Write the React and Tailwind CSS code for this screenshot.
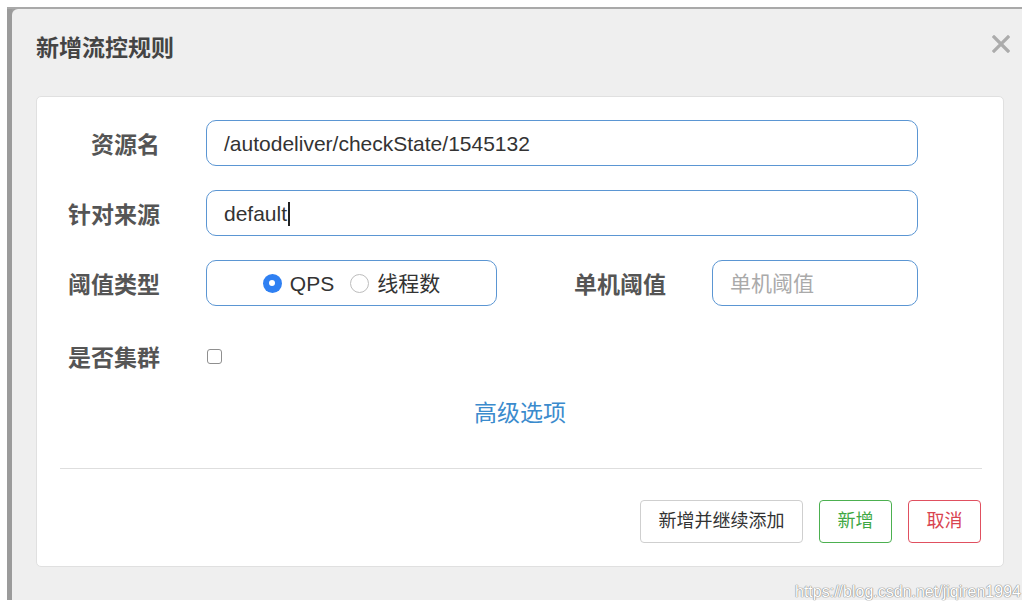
import React from 'react';

const FONT = { fontFamily: '"Liberation Sans", "Noto Sans CJK SC", sans-serif' };

function Label({ children, className = '' }) {
  return (
    <div className={`pt-[3px] text-right text-[23px] font-semibold text-[#555] leading-[28px] ${className}`}>
      {children}
    </div>
  );
}

function Radio({ checked, label }) {
  return (
    <label className="flex items-center gap-[8px]">
      {checked ? (
        <span className="flex h-[19px] w-[19px] items-center justify-center rounded-full bg-[#2f80f2]">
          <span className="h-[6px] w-[6px] rounded-full bg-white" />
        </span>
      ) : (
        <span className="h-[19px] w-[19px] rounded-full border border-[#bdbdbd] bg-white" />
      )}
      <span className="pt-[2px] text-[21px] leading-[26px] text-[#333]">{label}</span>
    </label>
  );
}

export default function App() {
  return (
    <div className="relative h-screen w-full overflow-hidden bg-white pl-[7px] pt-[7px]" style={FONT}>
      {/* dialog frame */}
      <div className="flex h-[593px] w-[1015px] border-t-2 border-[#a9a9a9] bg-[#a0a0a0]">
        <div className="w-[5px] shrink-0 bg-[#9b9b9b]" />
        <div className="flex flex-1 flex-col rounded-tl-[6px] bg-[#efefef] pl-[24px] pr-[18px]">
          {/* header */}
          <div className="flex h-[87px] shrink-0 items-start justify-between pt-[25px]">
            <h1 className="text-[23px] font-semibold leading-[28px] text-[#444]">新增流控规则</h1>
            <svg className="-mr-[6px] mt-[1px]" width="18" height="18" viewBox="0 0 18 18">
              <path d="M2 2 L16 16 M16 2 L2 16" stroke="#acacac" strokeWidth="3.2" strokeLinecap="square" />
            </svg>
          </div>

          {/* card */}
          <div className="flex h-[471px] flex-col rounded-[5px] border border-[#e0e0e0] bg-white pt-[23px]">
            <div className="flex h-[46px] items-center">
              <Label className="w-[123px]">资源名</Label>
              <div className="ml-[46px] flex h-[46px] w-[712px] items-center rounded-[10px] border-[1.5px] border-[#5b96d3] pl-[17px] pt-[2px] text-[21px] text-[#333]">
                /autodeliver/checkState/1545132
              </div>
            </div>

            <div className="mt-[24px] flex h-[46px] items-center">
              <Label className="w-[123px]">针对来源</Label>
              <div className="ml-[46px] flex h-[46px] w-[712px] items-center rounded-[10px] border-[1.5px] border-[#5b96d3] pl-[17px] pt-[2px] text-[21px] text-[#333]">
                default
                <span className="ml-[1px] h-[24px] w-[1.5px] bg-[#222]" />
              </div>
            </div>

            <div className="mt-[24px] flex h-[46px] items-center">
              <Label className="w-[123px]">阈值类型</Label>
              <div className="ml-[46px] flex h-[46px] w-[291px] items-center justify-center gap-[16px] rounded-[10px] border-[1.5px] border-[#5b96d3]">
                <Radio checked label="QPS" />
                <Radio label="线程数" />
              </div>
              <Label className="w-[169px]">单机阈值</Label>
              <div className="ml-[46px] flex h-[46px] w-[206px] items-center rounded-[10px] border-[1.5px] border-[#5b96d3] pl-[17px] pt-[1px] text-[21px] text-[#aaa]">
                单机阈值
              </div>
            </div>

            <div className="mt-[27px] flex h-[46px] items-center">
              <Label className="w-[123px]">是否集群</Label>
              <span className="ml-[47px] h-[15px] w-[15px] rounded-[3px] border border-[#8f8f8f] bg-white" />
            </div>

            <div className="mt-[18px] pt-[1px] text-center text-[23px] leading-[30px] text-[#3b8bcd]">高级选项</div>

            <div className="ml-[23px] mr-[21px] mt-[40px] h-px bg-[#dedede]" />

            <div className="mt-[31px] flex justify-end gap-[16px] pr-[22px]">
              <button className="h-[43px] w-[163px] rounded-[4px] border border-[#cfcfcf] bg-white text-[18px] text-[#333]">
                新增并继续添加
              </button>
              <button className="h-[43px] w-[73px] rounded-[4px] border border-[#4cb050] bg-white text-[18px] text-[#3fa844]">
                新增
              </button>
              <button className="h-[43px] w-[73px] rounded-[4px] border border-[#e05060] bg-white text-[18px] text-[#d9434f]">
                取消
              </button>
            </div>
          </div>
        </div>
      </div>

      {/* watermark */}
      <div className="absolute left-[795px] top-[582px] text-[16px] leading-[20px] text-white [text-shadow:0_0_1px_#888,0_0_1px_#888,0_0_1px_#888]">
        https://blog.csdn.net/jiqiren1994
      </div>
    </div>
  );
}
